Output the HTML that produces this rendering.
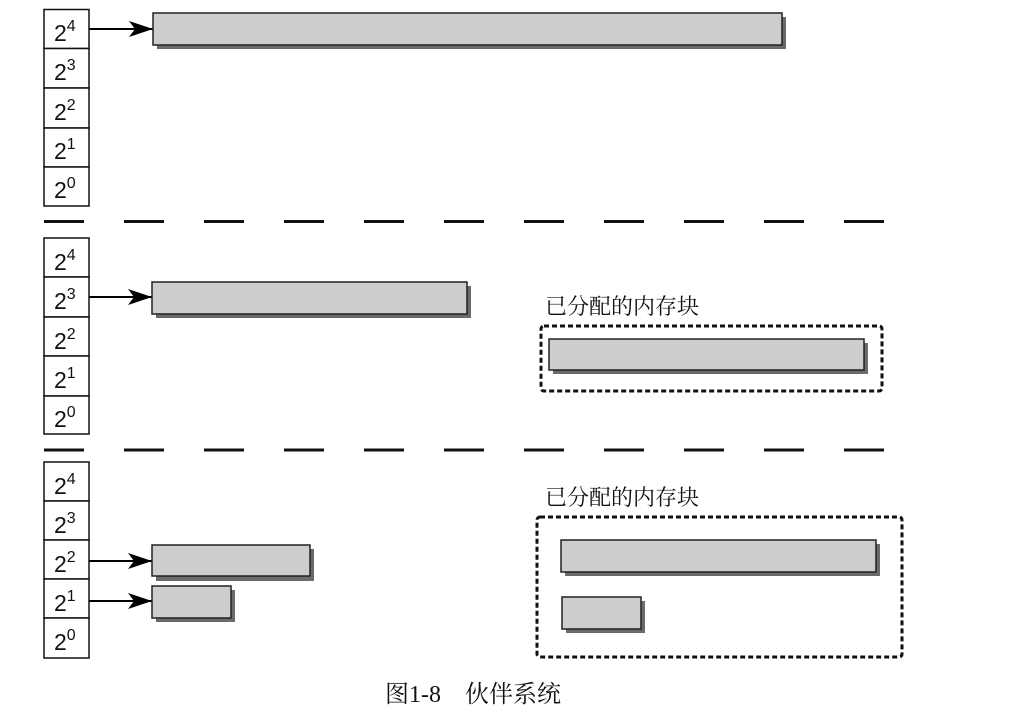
<!DOCTYPE html>
<html><head><meta charset="utf-8"><style>
html,body{margin:0;padding:0;background:#fff;}
svg{display:block;}
.n{font-family:"Liberation Sans","DejaVu Sans",sans-serif;font-size:23px;fill:#111;}
.s{font-size:16px;}
.cj{font-family:"Liberation Serif","Noto Serif CJK SC","Noto Sans CJK SC",serif;font-size:22px;fill:#111;}
</style></head><body>
<svg width="1024" height="712" viewBox="0 0 1024 712" xmlns="http://www.w3.org/2000/svg">
<defs>
<marker id="ah" markerWidth="26" markerHeight="18" refX="24" refY="9" orient="auto" markerUnits="userSpaceOnUse">
<path d="M0,1 L24,9 L0,17 L6,9 Z" fill="#000"/>
</marker>
</defs>
<g fill="#fff" stroke="#111" stroke-width="1.5">
<rect x="44" y="9.5" width="45" height="39"/><rect x="44" y="48.5" width="45" height="39.5"/><rect x="44" y="88" width="45" height="40"/><rect x="44" y="128" width="45" height="39"/><rect x="44" y="167" width="45" height="39"/>
<rect x="44" y="238" width="45" height="39"/><rect x="44" y="277" width="45" height="40"/><rect x="44" y="317" width="45" height="39"/><rect x="44" y="356" width="45" height="40"/><rect x="44" y="396" width="45" height="38"/>
<rect x="44" y="462" width="45" height="39"/><rect x="44" y="501" width="45" height="39"/><rect x="44" y="540" width="45" height="39"/><rect x="44" y="579" width="45" height="39"/><rect x="44" y="618" width="45" height="40"/>
</g>
<g class="n">
<text x="54" y="41">2<tspan class="s" dy="-10">4</tspan></text>
<text x="54" y="80">2<tspan class="s" dy="-10">3</tspan></text>
<text x="54" y="120">2<tspan class="s" dy="-10">2</tspan></text>
<text x="54" y="159">2<tspan class="s" dy="-10">1</tspan></text>
<text x="54" y="198">2<tspan class="s" dy="-10">0</tspan></text>
<text x="54" y="270">2<tspan class="s" dy="-10">4</tspan></text>
<text x="54" y="309">2<tspan class="s" dy="-10">3</tspan></text>
<text x="54" y="349">2<tspan class="s" dy="-10">2</tspan></text>
<text x="54" y="388">2<tspan class="s" dy="-10">1</tspan></text>
<text x="54" y="427">2<tspan class="s" dy="-10">0</tspan></text>
<text x="54" y="494">2<tspan class="s" dy="-10">4</tspan></text>
<text x="54" y="533">2<tspan class="s" dy="-10">3</tspan></text>
<text x="54" y="572">2<tspan class="s" dy="-10">2</tspan></text>
<text x="54" y="611">2<tspan class="s" dy="-10">1</tspan></text>
<text x="54" y="650">2<tspan class="s" dy="-10">0</tspan></text>
</g>
<g stroke="#111" stroke-width="3">
<line x1="44" y1="221.5" x2="884" y2="221.5" stroke-dasharray="40 40"/>
<line x1="44" y1="450" x2="884" y2="450" stroke-dasharray="40 40"/>
</g>
<g stroke="#000" stroke-width="2" marker-end="url(#ah)">
<line x1="89" y1="29" x2="153" y2="29"/>
<line x1="89" y1="297" x2="152" y2="297"/>
<line x1="89" y1="561" x2="152" y2="561"/>
<line x1="89" y1="601" x2="152" y2="601"/>
</g>
<g fill="#6b6b6d">
<rect x="157" y="17" width="629" height="32"/>
<rect x="156" y="286" width="315" height="32"/>
<rect x="156" y="549" width="158" height="32"/>
<rect x="156" y="590" width="79" height="32"/>
<rect x="553" y="343" width="315" height="31"/>
<rect x="565" y="544" width="315" height="32"/>
<rect x="566" y="601" width="79" height="32"/>
</g>
<g fill="#cbcdcf" stroke="#222" stroke-width="1.5">
<rect x="153" y="13" width="629" height="32"/>
<rect x="152" y="282" width="315" height="32"/>
<rect x="152" y="545" width="158" height="31"/>
<rect x="152" y="586" width="79" height="32"/>
<rect x="549" y="339" width="315" height="31"/>
<rect x="561" y="540" width="315" height="32"/>
<rect x="562" y="597" width="79" height="32"/>
</g>
<g fill="none" stroke="#111" stroke-width="3" stroke-dasharray="5 3">
<rect x="541" y="326" width="341" height="65" rx="3"/>
<rect x="537" y="517" width="365" height="140" rx="3"/>
</g>
<text class="cj" x="545" y="314">已分配的内存块</text>
<text class="cj" x="545" y="505">已分配的内存块</text>
<text class="cj" x="385" y="702" style="font-size:24px">图1-8　伙伴系统</text>
</svg>
</body></html>
